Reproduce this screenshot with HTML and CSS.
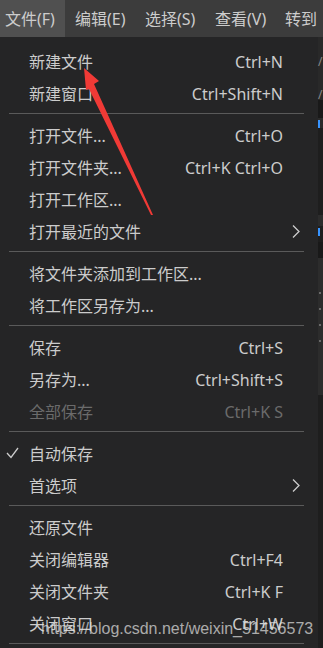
FILE: index.html
```html
<!DOCTYPE html>
<html lang="zh-CN">
<head>
<meta charset="utf-8">
<title>文件菜单</title>
<link rel="stylesheet" href="styles.css">
</head>
<body>
<div class="app">
  <div class="menubar">
    <div class="mb-item active">文件(F)</div>
    <div class="mb-item">编辑(E)</div>
    <div class="mb-item">选择(S)</div>
    <div class="mb-item">查看(V)</div>
    <div class="mb-item">转到</div>
  </div>
  <div class="main">
    <div class="menu">
      <div class="row"><span class="chk"></span><span class="label">新建文件</span><span class="key">Ctrl+N</span><span class="sub"></span></div>
      <div class="row"><span class="chk"></span><span class="label">新建窗口</span><span class="key">Ctrl+Shift+N</span><span class="sub"></span></div>
      <div class="sep"></div>
      <div class="row"><span class="chk"></span><span class="label">打开文件...</span><span class="key">Ctrl+O</span><span class="sub"></span></div>
      <div class="row"><span class="chk"></span><span class="label">打开文件夹...</span><span class="key">Ctrl+K Ctrl+O</span><span class="sub"></span></div>
      <div class="row"><span class="chk"></span><span class="label">打开工作区...</span><span class="key"></span><span class="sub"></span></div>
      <div class="row"><span class="chk"></span><span class="label">打开最近的文件</span><span class="key"></span><span class="sub"><svg width="35" height="32" viewBox="0 0 35 32"><polyline points="10,9.5 16,15.5 10,21.5" fill="none" stroke="#cccccc" stroke-width="1.3"/></svg></span></div>
      <div class="sep"></div>
      <div class="row"><span class="chk"></span><span class="label">将文件夹添加到工作区...</span><span class="key"></span><span class="sub"></span></div>
      <div class="row"><span class="chk"></span><span class="label">将工作区另存为...</span><span class="key"></span><span class="sub"></span></div>
      <div class="sep"></div>
      <div class="row"><span class="chk"></span><span class="label">保存</span><span class="key">Ctrl+S</span><span class="sub"></span></div>
      <div class="row"><span class="chk"></span><span class="label">另存为...</span><span class="key">Ctrl+Shift+S</span><span class="sub"></span></div>
      <div class="row disabled"><span class="chk"></span><span class="label">全部保存</span><span class="key">Ctrl+K S</span><span class="sub"></span></div>
      <div class="sep"></div>
      <div class="row"><span class="chk"><svg width="29" height="32" viewBox="0 0 29 32"><polyline points="7,15 11,19.5 18,10" fill="none" stroke="#cccccc" stroke-width="1.3"/></svg></span><span class="label">自动保存</span><span class="key"></span><span class="sub"></span></div>
      <div class="row"><span class="chk"></span><span class="label">首选项</span><span class="key"></span><span class="sub"><svg width="35" height="32" viewBox="0 0 35 32"><polyline points="10,9.5 16,15.5 10,21.5" fill="none" stroke="#cccccc" stroke-width="1.3"/></svg></span></div>
      <div class="sep"></div>
      <div class="row"><span class="chk"></span><span class="label">还原文件</span><span class="key"></span><span class="sub"></span></div>
      <div class="row"><span class="chk"></span><span class="label">关闭编辑器</span><span class="key">Ctrl+F4</span><span class="sub"></span></div>
      <div class="row"><span class="chk"></span><span class="label">关闭文件夹</span><span class="key">Ctrl+K F</span><span class="sub"></span></div>
      <div class="row"><span class="chk"></span><span class="label">关闭窗口</span><span class="key">Ctrl+W</span><span class="sub"></span></div>
      <div class="sep"></div>
    </div>
    <div class="strip">
      <div class="s s1"><span class="glyph">/</span><span class="glyph g2">/</span></div>
      <div class="s s2"></div>
      <div class="s s3"><span class="blue"></span></div>
      <div class="s s4"></div>
      <div class="s s5"></div>
      <div class="s s6"><span class="blue"></span></div>
      <div class="s s7"></div>
      <div class="s s8"><span class="dot"></span><span class="dot"></span><span class="dot"></span><span class="dot"></span></div>
      <div class="s s9"></div>
    </div>
  </div>
  <svg class="arrow" width="323" height="648" viewBox="0 0 323 648">
    <polygon points="84,68 99,81 94,84 153,215 151,215 89,89 86,90" fill="#f03a36"/>
  </svg>
  <div class="watermark">https://blog.csdn.net/weixin_51456573</div>
</div>
</body>
</html>
```
FILE: styles.css
```css
html, body {
  margin: 0;
  padding: 0;
  background: #1e1e1e;
  overflow: hidden;
}
.app {
  position: relative;
  width: 323px;
  height: 648px;
  overflow: hidden;
  font-family: "Noto Sans", "Noto Sans CJK SC", sans-serif;
  font-size: 16px;
  color: #cccccc;
}
.menubar {
  display: flex;
  height: 37px;
  background: #3c3c3c;
  margin-left: -5px;
  white-space: nowrap;
}
.mb-item {
  flex: none;
  width: 50px;
  padding: 0 10px;
  line-height: 38px;
  color: #cccccc;
}
.mb-item.active {
  background: #505050;
}
.main {
  display: flex;
  height: 611px;
}
.menu {
  flex: none;
  width: 318px;
  background: #252526;
  padding-top: 9px;
}
.row {
  display: grid;
  grid-template-columns: 29px 1fr auto 35px;
  height: 32px;
  align-items: center;
  white-space: nowrap;
}
.chk, .sub {
  height: 32px;
  display: block;
}
.chk svg, .sub svg {
  display: block;
}
.label {
  line-height: 32px;
}
.key {
  line-height: 32px;
  text-align: right;
}
.disabled {
  color: #6b6b6b;
}
.sep {
  height: 1px;
  margin: 3px 14px 6px 9px;
  background: #5a5a5a;
}
.strip {
  flex: 1;
  display: flex;
  flex-direction: column;
}
.s { position: relative; flex: none; }
.s1 { height: 63px; background: #292929; }
.glyph {
  position: absolute;
  left: 0;
  font-size: 12px;
  line-height: 12px;
  color: #8a8a8a;
}
.s1 .glyph { top: 19px; }
.s1 .g2 { top: 52px; }
.s2 { height: 18px; background: #191919; }
.s3 { height: 10px; background: #2a2a2a; }
.s4 { height: 87px; background: #1e1e1e; }
.s5 { height: 11px; background: #2c2c2c; }
.s6 { height: 16px; background: #1e1e1e; }
.blue {
  position: absolute;
  left: 0;
  top: 2px;
  width: 2px;
  height: 8px;
  background: #3794ff;
}
.s7 { height: 16px; background: #191919; }
.s8 {
  height: 137px;
  background: #2c2c2c;
  display: flex;
  flex-direction: column;
  padding-top: 34px;
  box-sizing: border-box;
  gap: 14px;
}
.dot {
  display: block;
  width: 2px;
  height: 2px;
  margin-left: 1px;
  background: #6a6a6a;
}
.s9 { height: 253px; background: #1e1e1e; }
.arrow {
  position: absolute;
  left: 0;
  top: 0;
  pointer-events: none;
}
.watermark {
  position: absolute;
  left: 41px;
  top: 620px;
  font-family: "Liberation Sans", Arial, sans-serif;
  font-size: 16px;
  line-height: 18px;
  color: rgba(225, 225, 225, 0.72);
  white-space: nowrap;
}
```
